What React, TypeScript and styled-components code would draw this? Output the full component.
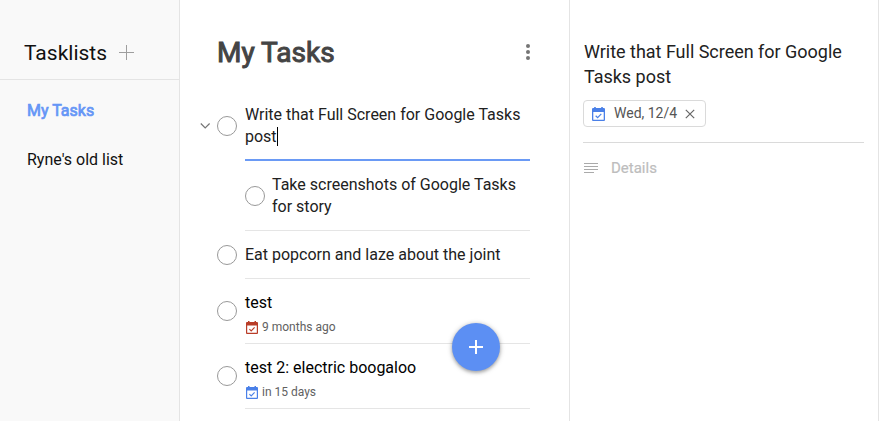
import React from "react";
import styled, { createGlobalStyle, css } from "styled-components";

const Global = createGlobalStyle`
  * { box-sizing: border-box; }
  body { margin: 0; background: #fff; font-family: Roboto, "Liberation Sans", sans-serif; color: #212121; overflow: hidden; }
  h1, h2, p { margin: 0; font-weight: 400; }
  svg { display: block; flex: none; }
`;

const Layout = styled.div`
  display: grid;
  grid-template-columns: 180px 390px 309px;
  height: 421px;
  overflow: hidden;
`;

const Sidebar = styled.aside`
  background: #f9f9f9;
  border-right: 1px solid #e4e4e4;
`;

const SidebarHeader = styled.header`
  display: flex;
  align-items: center;
  height: 80px;
  padding: 26px 0 0 24px;
  border-bottom: 1px solid #e4e4e4;
`;

const SidebarTitle = styled.h2`
  width: 95px;
  font-size: 21px;
  line-height: 24px;
  color: #111;
`;

const ListLink = styled.div<{ $active?: boolean }>`
  padding: 0 0 0 27px;
  margin-top: ${(p) => (p.$active ? 20 : 27)}px;
  font-size: 16px;
  line-height: 22px;
  color: ${(p) => (p.$active ? "#6596f6" : "#111")};
  ${(p) => p.$active && css`-webkit-text-stroke: 0.7px #6596f6;`}
`;

const Main = styled.main`
  position: relative;
  border-right: 1px solid #e4e4e4;
`;

const MainHeader = styled.header`
  display: flex;
  align-items: center;
  justify-content: space-between;
  height: 91px;
  padding: 13px 39px 0 37px;
`;

const MainTitle = styled.h1`
  font-size: 28px;
  line-height: 36px;
  padding-top: 1px;
  color: #444;
  -webkit-text-stroke: 1px #444;
`;

const TaskRow = styled.div<{ $sub?: boolean }>`
  display: flex;
  align-items: center;
  padding: 0 39px 0 ${(p) => (p.$sub ? 65 : 20)}px;
`;

const Chevron = styled.span`
  width: 17px;
  flex: none;
`;

const Check = styled.span<{ $dated?: boolean }>`
  width: 20px;
  height: 20px;
  flex: none;
  margin-bottom: ${(p) => (p.$dated ? 2 : 0)}px;
  border: 1px solid #999;
  border-radius: 50%;
`;

const TaskBody = styled.div<{ $sub?: boolean; $editing?: boolean; $dated?: boolean }>`
  flex: 1;
  position: relative;
  margin-left: ${(p) => (p.$sub ? 0 : 8)}px;
  padding: 13px 0 ${(p) => (p.$dated ? 8 : p.$editing ? 11 : 12)}px ${(p) => (p.$sub ? 7 : 0)}px;
  border-bottom: ${(p) => (p.$editing ? "2px solid #6a9af5" : "1px solid #e5e5e5")};
`;

const SubLine = styled.div`
  position: absolute;
  left: -20px;
  bottom: -1px;
  width: 20px;
  height: 1px;
  background: #e5e5e5;
`;

const TaskText = styled.p<{ $dark?: boolean }>`
  font-size: 16px;
  line-height: 22px;
  color: ${(p) => (p.$dark ? "#000" : "#212121")};
`;

const Caret = styled.span`
  display: inline-block;
  width: 1px;
  height: 19px;
  vertical-align: -4px;
  background: #000;
`;

const DueLine = styled.div`
  display: flex;
  align-items: center;
  gap: 4px;
  height: 16px;
  margin-top: 5px;
  padding-left: 1px;
  font-size: 12px;
  line-height: 16px;
  color: #616161;
`;

const AddButton = styled.button`
  position: absolute;
  left: 272px;
  top: 323px;
  display: grid;
  place-items: center;
  width: 48px;
  height: 48px;
  padding: 0;
  border: 0;
  border-radius: 50%;
  background: #5c8ff3;
  box-shadow: 0 1px 5px rgba(0, 0, 0, 0.35), 0 2px 3px rgba(0, 0, 0, 0.12);
`;

const Details = styled.section`
  border-right: 1px solid #e4e4e4;
  padding: 39px 14px 0 13px;
`;

const DetailTitle = styled.h2`
  font-size: 18px;
  line-height: 25px;
  padding-left: 1px;
  letter-spacing: -0.02px;
`;

const DetailTop = styled.div`
  height: 104px;
  border-bottom: 1px solid #dadada;
`;

const DateChip = styled.div`
  display: flex;
  align-items: center;
  width: 123px;
  height: 27px;
  margin-top: 11px;
  padding-left: 8px;
  border: 1px solid #dadada;
  border-radius: 4px;
  font-size: 14px;
  line-height: 16px;
  color: #555;
`;

const ChipText = styled.span`
  width: 71px;
  margin-left: 9px;
  margin-top: -1px;
  white-space: nowrap;
`;

const Notes = styled.div`
  display: flex;
  align-items: center;
  gap: 13px;
  margin-top: 15px;
  padding-left: 1px;
  font-size: 15px;
  line-height: 20px;
  color: #bdbdbd;
`;

const NotesLabel = styled.span`
  -webkit-text-stroke: 0.2px #bdbdbd;
`;

function Calendar({ color, width, height }: { color: string; width: number; height: number }) {
  return (
    <svg width={width} height={height} viewBox="0 0 12 13" preserveAspectRatio="none">
      <path
        fill={color}
        fillRule="evenodd"
        d="M1 1h1V0h1.5v1h5V0H10v1h1q1 0 1 1v10q0 1-1 1H1q-1 0-1-1V2q0-1 1-1zM1.2 4.6v7.2h9.6V4.6z"
      />
      <path d="M3.4 8.1l1.8 1.8 3.4-3.6" fill="none" stroke={color} strokeWidth="1.1" />
    </svg>
  );
}

type Task = { text: string; sub?: boolean; editing?: boolean; due?: string; dueColor?: string };

const tasks: Task[] = [
  { text: "Write that Full Screen for Google Tasks post", editing: true },
  { text: "Take screenshots of Google Tasks for story", sub: true },
  { text: "Eat popcorn and laze about the joint" },
  { text: "test", due: "9 months ago", dueColor: "#b93d28" },
  { text: "test 2: electric boogaloo", due: "in 15 days", dueColor: "#4a80e8" },
];

function TaskItem({ task }: { task: Task }) {
  return (
    <TaskRow $sub={task.sub}>
      {!task.sub && (
        <Chevron>
          {task.editing && (
            <svg width="11" height="8" viewBox="0 0 11 8">
              <path d="M0.8 1.5l4.4 4.4 4.4-4.4" fill="none" stroke="#757575" strokeWidth="1.2" />
            </svg>
          )}
        </Chevron>
      )}
      <Check $dated={!!task.due} />
      <TaskBody $sub={task.sub} $editing={task.editing} $dated={!!task.due}>
        <TaskText $dark={!!task.due}>
          {task.text}
          {task.editing && <Caret />}
        </TaskText>
        {task.due && (
          <DueLine>
            <Calendar color={task.dueColor!} width={12} height={13} />
            <span>{task.due}</span>
          </DueLine>
        )}
        {task.sub && <SubLine />}
      </TaskBody>
    </TaskRow>
  );
}

export default function App() {
  return (
    <>
      <Global />
      <Layout>
        <Sidebar>
          <SidebarHeader>
            <SidebarTitle>Tasklists</SidebarTitle>
            <svg width="15" height="15" viewBox="0 0 15 15">
              <path d="M7.5 0v15M0 7.5h15" stroke="#9e9e9e" />
            </svg>
          </SidebarHeader>
          <ListLink $active>My Tasks</ListLink>
          <ListLink>Ryne's old list</ListLink>
        </Sidebar>
        <Main>
          <MainHeader>
            <MainTitle>My Tasks</MainTitle>
            <svg width="4" height="16" viewBox="0 0 4 16" fill="#757575">
              <circle cx="2" cy="2" r="2" />
              <circle cx="2" cy="8" r="2" />
              <circle cx="2" cy="14" r="2" />
            </svg>
          </MainHeader>
          {tasks.map((t) => (
            <TaskItem key={t.text} task={t} />
          ))}
          <AddButton aria-label="Add task">
            <svg width="14" height="14" viewBox="0 0 14 14">
              <path d="M7 0v14M0 7h14" stroke="#fff" strokeWidth="2" />
            </svg>
          </AddButton>
        </Main>
        <Details>
          <DetailTop>
            <DetailTitle>Write that Full Screen for Google Tasks post</DetailTitle>
            <DateChip>
              <Calendar color="#4a80e8" width={13} height={14} />
              <ChipText>Wed, 12/4</ChipText>
              <svg width="10" height="10" viewBox="0 0 10 10">
                <path d="M0.8 0.8l8.4 8.4M9.2 0.8l-8.4 8.4" stroke="#666" strokeWidth="1.2" />
              </svg>
            </DateChip>
          </DetailTop>
          <Notes>
            <svg width="14" height="10" viewBox="0 0 14 10">
              <path d="M0 .5h14M0 3.5h14M0 6.5h14M0 9.5h10" stroke="#aaa" />
            </svg>
            <NotesLabel>Details</NotesLabel>
          </Notes>
        </Details>
      </Layout>
    </>
  );
}
